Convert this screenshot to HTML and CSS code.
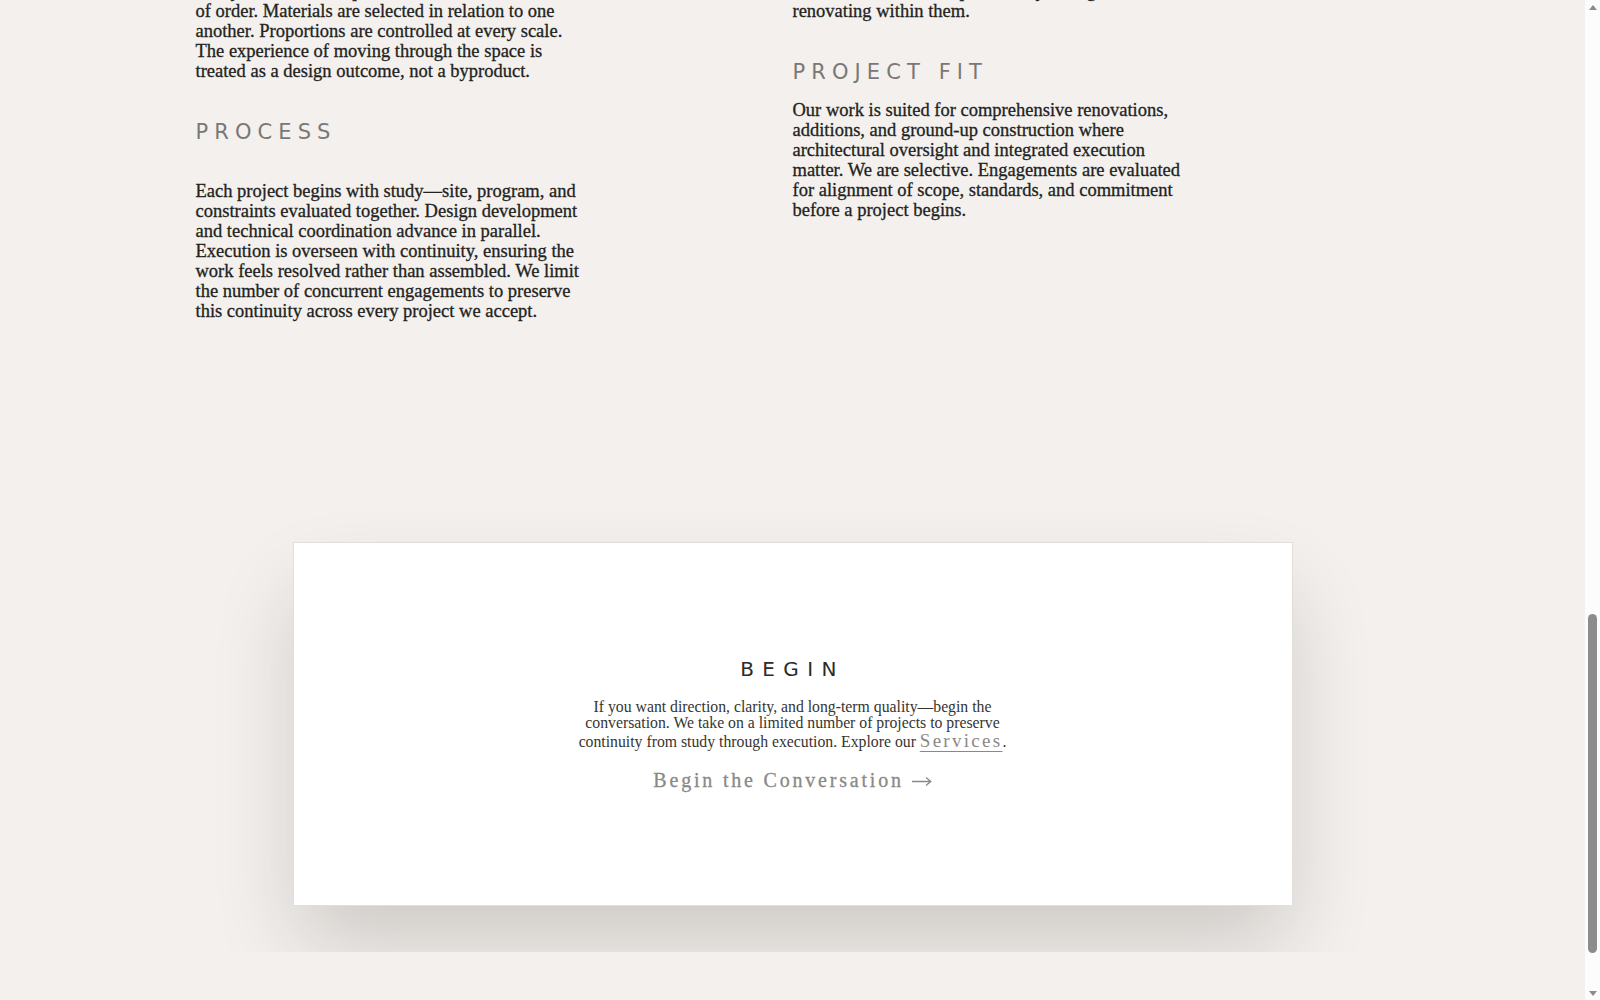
FILE: index.html
```html
<!DOCTYPE html>
<html lang="en">
<head>
<meta charset="utf-8">
<title>Hollis Marrow Studio — Approach</title>
<link rel="stylesheet" href="styles.css">
</head>
<body>
  <header class="site-header">
    <a class="brand" href="#">Hollis Marrow</a>
    <nav class="site-nav">
      <a href="#approach">Approach</a>
      <a href="#services">Services</a>
      <a href="#projects">Projects</a>
      <a href="#contact">Contact</a>
    </nav>
  </header>

  <section class="hero">
    <div class="hero-panel">
      <h1 class="hero-title">Architecture and interiors, resolved as one.</h1>
      <p class="hero-lede">A design and building practice for owners who value clarity, permanence, and care.</p>
    </div>
  </section>

  <section class="principles" id="approach">
    <div class="principles-inner">
      <div class="principle-col">
        <h2 class="label">Approach</h2>
        <p class="copy">Every interior is composed around a deliberate sense of order. Materials are selected in relation to one another. Proportions are controlled at every scale. The experience of moving through the space is treated as a design outcome, not a byproduct.</p>
        <h2 class="label">Process</h2>
        <p class="copy copy--open">Each project begins with study—site, program, and constraints evaluated together. Design development and technical coordination advance in parallel. Execution is overseen with continuity, ensuring the work feels resolved rather than assembled. We limit the number of concurrent engagements to preserve this continuity across every project we accept.</p>
      </div>
      <div class="principle-col">
        <h2 class="label">Clients</h2>
        <p class="copy">We serve owners who plan to stay, living in and renovating within them.</p>
        <h2 class="label">Project Fit</h2>
        <p class="copy">Our work is suited for comprehensive renovations, additions, and ground-up construction where architectural oversight and integrated execution matter. We are selective. Engagements are evaluated for alignment of scope, standards, and commitment before a project begins.</p>
      </div>
    </div>
  </section>

  <section class="begin" id="contact">
    <div class="begin-card">
      <h2 class="begin-title">Begin</h2>
      <p class="begin-text">If you want direction, clarity, and long-term quality—begin the conversation. We take on a limited number of projects to preserve continuity from study through execution. Explore our <a class="inline-link" href="#services">Services</a>.</p>
      <a class="cta" href="#contact">Begin the Conversation <svg class="cta-arrow" width="20" height="10" viewBox="0 0 20 10" aria-hidden="true"><path d="M0 5.5H18.5M14 1.5L18.8 5.5L14 9.5" fill="none" stroke="currentColor" stroke-width="1.3"/></svg></a>
    </div>
  </section>

  <footer class="site-footer">
    <p class="footer-note">© Hollis Marrow Studio</p>
  </footer>

  <div class="scroll-rail" aria-hidden="true">
    <span class="scroll-arrow scroll-arrow--up"></span>
    <span class="scroll-track"><span class="scroll-thumb"></span></span>
    <span class="scroll-arrow scroll-arrow--down"></span>
  </div>

  <script src="script.js"></script>
</body>
</html>
```

FILE: styles.css
```css
html {
  background: #f3f0ed;
}

body {
  margin: 0;
  padding-right: 15px;
  background: #f3f0ed;
  color: #2b2825;
  font-family: "Liberation Serif", "Times New Roman", serif;
}

a {
  color: inherit;
  text-decoration: none;
}

/* Header */
.site-header {
  height: 96px;
  box-sizing: border-box;
  padding: 0 196px;
  display: flex;
  align-items: center;
  justify-content: space-between;
}

.brand {
  font-family: "DejaVu Sans", sans-serif;
  font-size: 16px;
  letter-spacing: 0.35em;
  text-transform: uppercase;
  color: #2d2b29;
}

.site-nav {
  display: flex;
  gap: 40px;
  font-size: 17px;
  letter-spacing: 0.08em;
  color: #5c5955;
}

/* Hero */
.hero {
  height: 1612px;
  box-sizing: border-box;
  padding: 0 0 140px;
}

.hero-panel {
  height: 100%;
  box-sizing: border-box;
  padding: 0 196px 160px;
  display: flex;
  flex-direction: column;
  justify-content: flex-end;
  background: linear-gradient(180deg, #d9d3cc 0%, #bfb6ac 100%);
}

.hero-title {
  margin: 0;
  font-weight: normal;
  font-size: 56px;
  line-height: 1.1;
  max-width: 720px;
  color: #2b2825;
}

.hero-lede {
  margin: 20px 0 0;
  font-size: 20px;
  max-width: 520px;
  color: #3b3834;
}

/* Two-column principles */
.principles {
  padding: 0 0 100px;
}

.principles-inner {
  width: 1194px;
  margin: 0 auto;
  display: grid;
  grid-template-columns: 1fr 1fr;
  align-items: start;
}

.label {
  margin: 39px 0 16px;
  font-family: "DejaVu Sans", sans-serif;
  font-weight: normal;
  font-size: 21px;
  line-height: 24px;
  letter-spacing: 0.29em;
  text-transform: uppercase;
  color: #7a7876;
}

.label:first-child {
  margin-top: 0;
}

.copy {
  margin: 0;
  max-width: 396px;
  font-size: 18.5px;
  line-height: 20px;
  color: #221f1d;
  -webkit-text-stroke: 0.3px currentColor;
}

.label + .copy--open {
  margin-top: 37px;
}

/* Closing invitation */
.begin {
  padding: 121px 0 46px;
}

.begin-card {
  width: 1000px;
  height: 364px;
  box-sizing: border-box;
  margin: 0 auto;
  background: #ffffff;
  border: 1px solid #e2dfdb;
  box-shadow: 0 44px 80px -8px rgba(40, 32, 24, 0.19);
  display: flex;
  flex-direction: column;
  align-items: center;
  justify-content: center;
  text-align: center;
}

.begin-title {
  margin: 0;
  font-family: "DejaVu Sans", sans-serif;
  font-weight: normal;
  font-size: 20px;
  line-height: 24px;
  letter-spacing: 0.42em;
  text-transform: uppercase;
  color: #2d2b29;
}

.begin-text {
  margin: 18px 0 0;
  max-width: 450px;
  font-size: 15.75px;
  line-height: 16px;
  color: #363431;
}

.inline-link {
  font-size: 19px;
  line-height: 1;
  letter-spacing: 0.12em;
  color: #8b8986;
  text-decoration: underline;
  text-decoration-thickness: 1px;
  text-underline-offset: 4px;
}

.cta {
  margin-top: 18px;
  font-size: 20px;
  line-height: 24px;
  letter-spacing: 0.14em;
  color: #8b8986;
  -webkit-text-stroke: 0.3px currentColor;
}

.cta-arrow {
  vertical-align: 1px;
}

/* Footer */
.site-footer {
  height: 142px;
  box-sizing: border-box;
  padding: 70px 196px 0;
  background: #f3f0ed;
}

.footer-note {
  margin: 0;
  font-size: 14px;
  color: #8b8986;
}

/* Window scroll indicator */
.scroll-rail {
  position: fixed;
  top: 0;
  right: 0;
  bottom: 0;
  width: 15px;
  display: flex;
  flex-direction: column;
  background: #fcfcfc;
}

.scroll-arrow {
  height: 15px;
  flex: none;
  display: flex;
  align-items: center;
  justify-content: center;
}

.scroll-arrow::before {
  content: "";
  border-left: 4px solid transparent;
  border-right: 4px solid transparent;
}

.scroll-arrow--up::before {
  border-bottom: 5px solid #8a8a8a;
  margin-top: -1px;
}

.scroll-arrow--down::before {
  border-top: 5px solid #8a8a8a;
  margin-top: 1px;
}

.scroll-track {
  flex: 1;
  position: relative;
}

.scroll-thumb {
  position: absolute;
  left: 3px;
  right: 3px;
  top: 0;
  height: 40px;
  border-radius: 5px;
  background: #8c8c8c;
}
```

FILE: script.js
```js
// Open the page on the closing invitation, with the card in the lower half of the window.
function showInvitation() {
  var card = document.querySelector('.begin-card');
  var top = card.getBoundingClientRect().top + window.scrollY;
  window.scrollTo(0, top - 542);
}

// Keep the scroll indicator in step with the window position.
function syncRail() {
  var track = document.querySelector('.scroll-track');
  var thumb = document.querySelector('.scroll-thumb');
  var total = document.documentElement.scrollHeight;
  var view = window.innerHeight;
  var trackLen = track.clientHeight;
  var len = Math.max(24, trackLen * view / total);
  var max = total - view;
  var pos = max > 0 ? (trackLen - len) * window.scrollY / max : 0;
  thumb.style.height = len + 'px';
  thumb.style.top = pos + 'px';
}

function init() {
  showInvitation();
  syncRail();
}

init();
window.addEventListener('load', init);
window.addEventListener('scroll', syncRail);
window.addEventListener('resize', syncRail);
```
